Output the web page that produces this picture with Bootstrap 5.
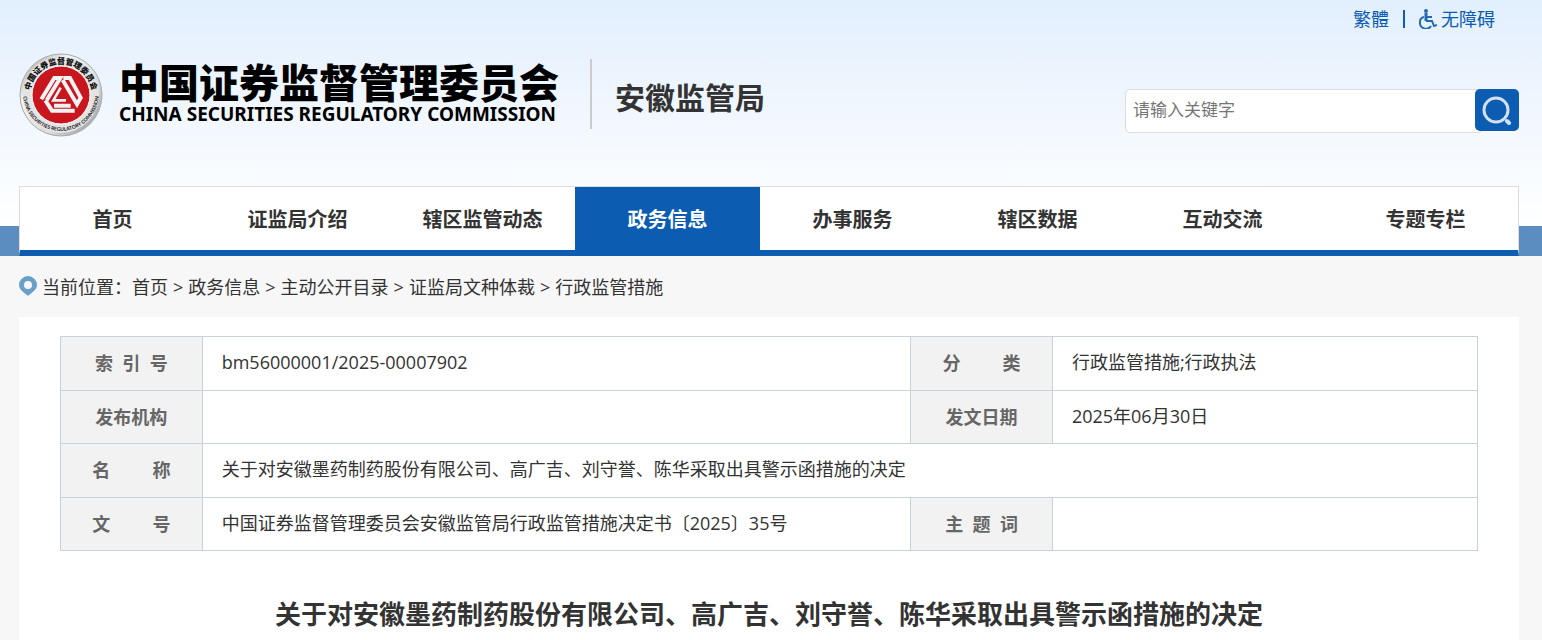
<!DOCTYPE html>
<html lang="zh-CN">
<head>
<meta charset="utf-8">
<meta name="viewport" content="width=device-width, initial-scale=1">
<title>安徽监管局</title>
<link href="https://cdn.jsdelivr.net/npm/bootstrap@5.3.0/dist/css/bootstrap.min.css" rel="stylesheet">
<style>
  :root { --brand: #0c5cb2; --ink: #333; }
  body { font-family: "Open Sans", "Noto Sans CJK SC", sans-serif; font-size: 18px; line-height: 26px; color: var(--ink); background: #f7f7f7; }
  .page-wrap { padding-left: 19px; padding-right: 23px; }
  .site-head { background: linear-gradient(to top, #5c8dc0 30px, transparent 30px), linear-gradient(#e2effd, #fff 226px); }
  .top-links { padding: 6px 24px 0 0; }
  .top-links a { color: var(--brand); text-decoration: none; }
  .top-rule { width: 2px; height: 18px; background: var(--brand); margin: 0 14px; }
  .brand-row { height: 154px; padding-top: 21px; }
  .brand-text { padding-top: 6px; }
  .brand-zh { font-family: "Noto Sans CJK SC", sans-serif; font-size: 40px; font-weight: 900; line-height: 45px; color: #000; }
  .brand-en { font-family: "Noto Sans", sans-serif; font-size: 19px; font-weight: 700; line-height: 20px; color: #000; }
  .bureau { border-left: 2px solid #ccc; height: 70px; font-size: 30px; font-weight: 700; line-height: 78px; padding-left: 23px; margin-left: 31px; margin-top: 6px; }
  .search { padding-top: 36px; }
  .search input { width: 358px; height: 44px; border: 1px solid #ddd; border-radius: 5px; padding: 0 8px 3px 7px; font-size: 17px; color: var(--ink); }
  .search input::placeholder { color: #757575; opacity: 1; }
  .search button { width: 44px; height: 42px; margin-left: -8px; border: 0; border-radius: 5px; background: var(--brand); z-index: 1; }
  .main-nav { background: #fff; border: 1px solid #ddd; border-bottom: 6px solid var(--brand); }
  .main-nav a { flex: 0 0 12.35%; padding-top: 2px; font-size: 20px; font-weight: 700; line-height: 61px; color: var(--ink); text-align: center; text-decoration: none; white-space: nowrap; }
  .main-nav a.active { background: var(--brand); color: #fff; }
  .main-nav a:last-child { flex: 1 0 auto; padding-left: 18px; }
  .crumbs { height: 61px; }
  .crumb-list { gap: 5px; }
  .crumbs a { color: var(--ink); text-decoration: none; }
  .sheet { background: #fff; padding: 19px 41px 6px; }
  .info { height: 215px; table-layout: fixed; border-collapse: collapse; }
  .info th, .info td { border: 1px solid #c6d2dc; vertical-align: middle; }
  .info td { padding: 0 19px 2px; }
  .info th { background: #f2f2f2; color: #666; text-align: center; padding: 0; }
  .doc-title { font-size: 26px; font-weight: 700; line-height: 40px; margin: 43px 0 0; text-align: center; }
</style>
<script src="https://cdn.jsdelivr.net/npm/bootstrap@5.3.0/dist/js/bootstrap.bundle.min.js"></script>
</head>
<body>
<header class="site-head page-wrap">
  <div class="top-links d-flex justify-content-end align-items-center">
    <a href="#">繁體</a>
    <span class="top-rule"></span>
    <a href="#" class="d-flex align-items-center gap-1">
      <svg width="18" height="20" viewBox="0 0 18 20" fill="none" stroke="#2468b4" stroke-width="2" aria-hidden="true"><circle cx="7" cy="2" r="2" fill="#2468b4" stroke="none"/><path stroke-width="3" d="M7 4v8"/><path d="M7 12h6l2 5 3-1M7 8h6"/><path d="M5 8a5 5 0 0 0-4 5a6 6 0 0 0 11 4"/></svg>
      无障碍
    </a>
  </div>
  <div class="brand-row d-flex justify-content-between align-items-start">
    <div class="d-flex align-items-start">
      <svg class="flex-shrink-0" width="84" height="84" viewBox="0 0 84 84" role="img" aria-label="中国证监会徽标">
        <defs>
          <linearGradient id="silver" x1="0" y1="0" x2="1" y2="1"><stop offset="0" stop-color="#999"/><stop offset=".3" stop-color="#f4f4f4"/><stop offset=".65" stop-color="#dcdcdc"/><stop offset="1" stop-color="#8a8a8a"/></linearGradient>
          <path id="arcTop" d="M11 42A31 31 0 0 1 73 42"/>
          <path id="arcBottom" d="M4 40A38 38 0 0 0 80 40"/>
        </defs>
        <circle cx="42" cy="42" r="41" fill="url(#silver)" stroke="#aaa"/>
        <circle cx="42" cy="42" r="38" fill="#e4e4e4"/>
        <circle cx="42" cy="42" r="29" fill="#c9151e" stroke="#fff"/>
        <text font-family="Noto Sans CJK SC, sans-serif" font-weight="900" font-size="8" fill="#111" text-anchor="middle"><textPath href="#arcTop" startOffset="50%">中国证券监督管理委员会</textPath></text>
        <text font-family="Lato, sans-serif" font-weight="700" font-size="5" fill="#111" text-anchor="middle"><textPath href="#arcBottom" startOffset="50%">CHINA SECURITIES REGULATORY COMMISSION</textPath></text>
        <g fill="none" stroke="#f2f2f2" stroke-width="12" transform="translate(-9 -8) scale(.3333)">
          <path d="M94 163L133 99H151L110 166"/>
          <path d="M160 99H180L212 158L201 178L158 105"/>
          <path d="M194 197H126L106 166M132 182H182"/>
          <path d="M152 128L130 166H168" stroke-width="8"/>
        </g>
      </svg>
      <div class="brand-text ms-3 text-nowrap">
        <div class="brand-zh">中国证券监督管理委员会</div>
        <div class="brand-en">CHINA SECURITIES REGULATORY COMMISSION</div>
      </div>
      <div class="bureau text-nowrap">安徽监管局</div>
    </div>
    <form class="search d-flex align-items-start" role="search">
      <input type="text" placeholder="请输入关键字" aria-label="请输入关键字">
      <button type="button" class="d-flex justify-content-center align-items-center p-0" aria-label="搜索">
        <svg width="30" height="30" viewBox="0 0 30 30" fill="none" stroke="#d2e1f2" aria-hidden="true"><circle cx="14" cy="15" r="12" stroke-width="3"/><path d="M25 26l2 2" stroke-width="4" stroke-linecap="round"/></svg>
      </button>
    </form>
  </div>
  <nav class="main-nav d-flex">
    <a href="#">首页</a>
    <a href="#">证监局介绍</a>
    <a href="#">辖区监管动态</a>
    <a href="#" class="active" aria-current="page">政务信息</a>
    <a href="#">办事服务</a>
    <a href="#">辖区数据</a>
    <a href="#">互动交流</a>
    <a href="#">专题专栏</a>
  </nav>
</header>
<main class="page-wrap">
  <nav class="crumbs d-flex align-items-center text-nowrap" aria-label="当前位置">
    <svg class="me-1" width="19" height="21" viewBox="0 0 19 21" aria-hidden="true"><path fill="#6a9fca" fill-rule="evenodd" d="M9 0a9 9 0 0 1 9 9c0 5-6 8-9 11C6 17 0 14 0 9a9 9 0 0 1 9-9zm0 5a4 4 0 1 0 0 8 4 4 0 0 0 0-8z"/></svg>
    <span>当前位置：</span>
    <div class="crumb-list d-flex">
      <a href="#">首页</a><span>&gt;</span>
      <a href="#">政务信息</a><span>&gt;</span>
      <a href="#">主动公开目录</a><span>&gt;</span>
      <a href="#">证监局文种体裁</a><span>&gt;</span>
      <a href="#">行政监管措施</a>
    </div>
  </nav>
  <article class="sheet">
    <table class="info w-100">
      <colgroup><col style="width:10%"><col style="width:50%"><col style="width:10%"><col style="width:30%"></colgroup>
      <tbody>
        <tr><th scope="row">索&nbsp; 引&nbsp; 号</th><td>bm56000001/2025-00007902</td><th scope="row">分&nbsp;&nbsp;&nbsp;&nbsp;&nbsp;&nbsp;&nbsp;&nbsp;&nbsp;类</th><td>行政监管措施;行政执法</td></tr>
        <tr><th scope="row">发布机构</th><td></td><th scope="row">发文日期</th><td>2025年06月30日</td></tr>
        <tr><th scope="row">名&nbsp;&nbsp;&nbsp;&nbsp;&nbsp;&nbsp;&nbsp;&nbsp;&nbsp;称</th><td colspan="3">关于对安徽墨药制药股份有限公司、高广吉、刘守誉、陈华采取出具警示函措施的决定</td></tr>
        <tr><th scope="row">文&nbsp;&nbsp;&nbsp;&nbsp;&nbsp;&nbsp;&nbsp;&nbsp;&nbsp;号</th><td>中国证券监督管理委员会安徽监管局行政监管措施决定书〔2025〕35号</td><th scope="row">主&nbsp; 题&nbsp; 词</th><td></td></tr>
      </tbody>
    </table>
    <h1 class="doc-title">关于对安徽墨药制药股份有限公司、高广吉、刘守誉、陈华采取出具警示函措施的决定</h1>
  </article>
</main>
</body>
</html>
